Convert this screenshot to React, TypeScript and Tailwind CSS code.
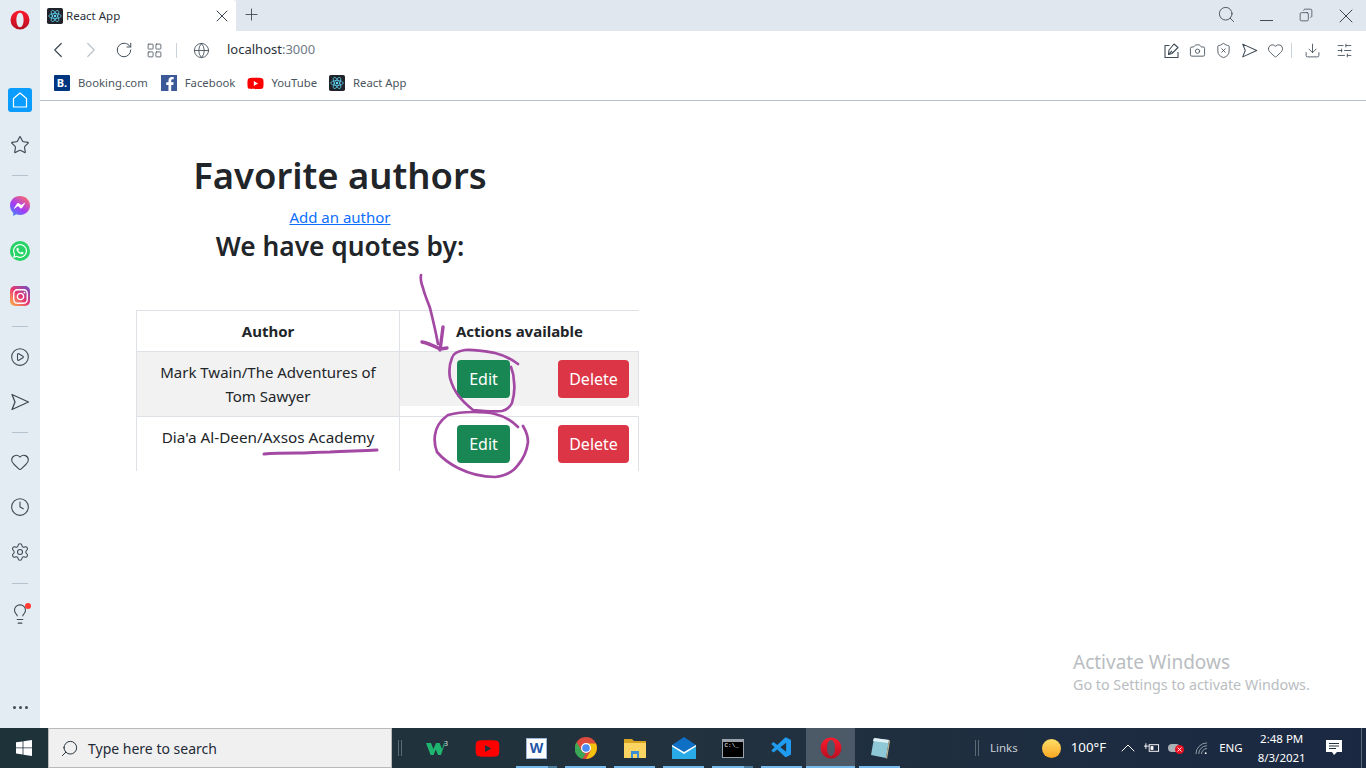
import React from "react";
import { ChevronLeft, ChevronRight, RotateCw, LayoutGrid, Globe, X, Plus, Search, Minus, Copy, Camera, ShieldX, Heart, Download, SlidersHorizontal, Star, CirclePlay, Clock, Settings, Lightbulb, ChevronUp } from "lucide-react";
import { FaWhatsapp, FaInstagram, FaFacebookF, FaYoutube } from "react-icons/fa";
import { VscVscode } from "react-icons/vsc";

const sans = "font-['Noto_Sans','Open_Sans',sans-serif]";

function Atom({ s = 18 }: { s?: number }) {
  return (
    <svg width={s} height={s} viewBox="0 0 18 18" className="shrink-0">
      <rect width="18" height="18" rx="2" fill="#20232a" />
      <g fill="none" stroke="#61dafb" strokeWidth="0.8">
        <ellipse cx="9" cy="9" rx="7" ry="2.8" />
        <ellipse cx="9" cy="9" rx="7" ry="2.8" transform="rotate(60 9 9)" />
        <ellipse cx="9" cy="9" rx="7" ry="2.8" transform="rotate(120 9 9)" />
      </g>
      <circle cx="9" cy="9" r="1.4" fill="#61dafb" />
    </svg>
  );
}

function Opera({ s = 20, id }: { s?: number; id: string }) {
  return (
    <svg width={s} height={s} viewBox="0 0 20 20" className="shrink-0">
      <defs>
        <linearGradient id={id} x1="0" y1="0" x2="0" y2="1">
          <stop offset="0" stopColor="#ff1b2d" />
          <stop offset="1" stopColor="#b70f22" />
        </linearGradient>
      </defs>
      <path fillRule="evenodd" fill={`url(#${id})`} d="M10 0.5a9.5 9.5 0 1 0 0 19a9.5 9.5 0 1 0 0-19zM10 2.800c2.200 0 3.600 3.200 3.600 7.200s-1.400 7.200-3.600 7.200s-3.600-3.200-3.600-7.200s1.400-7.200 3.600-7.200z" />
    </svg>
  );
}

function Messenger() {
  return (
    <svg width="20" height="20" viewBox="0 0 20 20">
      <defs>
        <linearGradient id="ms" x1="0.1" y1="1" x2="0.8" y2="0">
          <stop offset="0" stopColor="#3b8bff" />
          <stop offset="0.45" stopColor="#a33cf5" />
          <stop offset="1" stopColor="#ff6a68" />
        </linearGradient>
      </defs>
      <path fill="url(#ms)" d="M10 0C4.400 0 0 4.100 0 9.600c0 2.900 1.200 5.400 3.200 7.100V20l3-1.700c1.200.4 2.500.6 3.800.6c5.600 0 10-4.100 10-9.400S15.600 0 10 0z" />
      <path fill="#fff" d="M4 12.300l3-4.700c.4-.7 1.300-.8 1.900-.4l2.300 1.700l3.600-2.200c.3-.2.6.1.4.4l-3 4.700c-.4.7-1.300.8-1.900.4L8 10l-3.600 2.700c-.3.2-.6-.1-.4-.4z" />
    </svg>
  );
}

function Chrome() {
  return (
    <svg width="22" height="22" viewBox="0 0 22 22">
      <circle cx="11" cy="11" r="11" fill="#dd4b3e" />
      <path fill="#f4c20d" d="M11 6.500h9.900a11 11 0 0 1-9.900 15.500l4.800-8.500z" />
      <path fill="#3aa757" d="M1.600 5.300l4.900 8.300a5 5 0 0 0 4.500 2.900L7 22A11 11 0 0 1 1.600 5.300z" />
      <circle cx="11" cy="11" r="5" fill="#fff" />
      <circle cx="11" cy="11" r="3.800" fill="#4a8bf5" />
    </svg>
  );
}

function Plane({ s, w = 1.3 }: { s: number; w?: number }) {
  return (
    <svg width={s} height={s} viewBox="0 0 20 20" fill="none" stroke="#3f4a55" strokeWidth={w} strokeLinejoin="round" className="shrink-0">
      <path d="M2 2.500L18.500 10L2 17.500L5 10z" />
    </svg>
  );
}

function TaskSlot({ children, line, stack, active }: { children?: React.ReactNode; line?: boolean; stack?: boolean; active?: boolean }) {
  return (
    <div className={`relative h-full w-[49px] flex items-center justify-center shrink-0 ${active ? "bg-[#4b5a66]" : ""}`}>
      {children}
      {line && <div className={`absolute bottom-0 h-[2px] bg-[#76b9ed] ${active ? "left-0 right-0" : "left-[4px] right-[4px]"}`} />}
      {stack && <div className="absolute bottom-0 right-[4px] w-[9px] h-[2px] bg-[#4b7d9f]" />}
    </div>
  );
}

function Divider() {
  return <div className="w-[16px] h-px bg-[#b5c3cf]" />;
}

function Btn({ color, w, children }: { color: string; w: string; children: React.ReactNode }) {
  return (
    <button className={`h-[38px] ${w} ${color} rounded-[4px] text-white text-[16px] leading-6 flex items-center justify-center`}>
      {children}
    </button>
  );
}

export default function App() {
  return (
    <div className={`relative w-[1366px] h-[768px] overflow-hidden flex flex-col bg-white text-[#212529] ${sans}`}>
      <div className="flex flex-1 min-h-0">
        {/* Sidebar */}
        <aside className="w-10 shrink-0 bg-[#e3ebf3] flex flex-col items-center text-[#3f4a55]">
          <div className="mt-[10px]"><Opera s={20} id="op1" /></div>
          <div className="mt-[58px] w-6 h-6 rounded-[3px] bg-[#0a9dff] flex items-center justify-center">
            <svg width="18" height="18" viewBox="0 0 18 18" fill="none" stroke="#fff" strokeWidth="1.200" strokeLinejoin="round"><path d="M9 2L15.500 7.500V16H2.500V7.500z" /></svg>
          </div>
          <Star size={20} strokeWidth={1.4} className="mt-[23px]" />
          <div className="mt-[20px]"><Divider /></div>
          <div className="mt-[20px] h-5"><Messenger /></div>
          <div className="mt-[25px] w-5 h-5 rounded-full bg-[#25d366] flex items-center justify-center text-white"><FaWhatsapp size={16} /></div>
          <div className="mt-[25px] w-5 h-5 rounded-[5px] bg-gradient-to-tr from-[#fdb42f] via-[#e6306f] to-[#6a3fc4] flex items-center justify-center text-white"><FaInstagram size={17} /></div>
          <div className="mt-[20px]"><Divider /></div>
          <CirclePlay size={20} strokeWidth={1.3} className="mt-[20px]" />
          <div className="mt-[25px]"><Plane s={20} /></div>
          <div className="mt-[20px]"><Divider /></div>
          <Heart size={20} strokeWidth={1.3} className="mt-[19px]" />
          <Clock size={20} strokeWidth={1.3} className="mt-[25px]" />
          <Settings size={20} strokeWidth={1.3} className="mt-[25px]" />
          <div className="mt-[21px]"><Divider /></div>
          <div className="relative mt-[19px]">
            <Lightbulb size={22} strokeWidth={1.2} />
            <span className="absolute top-0 right-0 w-[6px] h-[6px] rounded-full bg-[#ff3b30]" />
          </div>
          <div className="mt-auto mb-[19px] flex gap-[3px]">
            <span className="w-[3px] h-[3px] rounded-full bg-[#3f4a55]" />
            <span className="w-[3px] h-[3px] rounded-full bg-[#3f4a55]" />
            <span className="w-[3px] h-[3px] rounded-full bg-[#3f4a55]" />
          </div>
        </aside>

        {/* Browser */}
        <div className="flex-1 min-w-0 flex flex-col">
          <div className="h-[31px] shrink-0 bg-[#e0e7ef] flex items-center">
            <div className="w-[196px] h-full bg-white flex items-center pl-[7px] pr-[4px] rounded-tr-[3px]">
              <Atom s={16} />
              <span className="ml-[3px] text-[11.500px] text-[#2b3138] flex-1">React App</span>
              <X size={20} strokeWidth={1.2} color="#3b4450" />
            </div>
            <Plus size={19} strokeWidth={1.1} color="#3b4450" className="ml-[6px] -mt-[2px]" />
            <div className="flex-1" />
            <Search size={19} strokeWidth={1.1} color="#3b4450" className="-mt-[2px]" />
            <Minus size={21} strokeWidth={1.1} color="#3b4450" className="ml-[20px] mt-[9px]" />
            <Copy size={14} strokeWidth={1.300} color="#3b4450" className="ml-[22px] -scale-x-100 -mt-[1px]" />
            <X size={24} strokeWidth={1} color="#3b4450" className="ml-[21px] mr-[8px]" />
          </div>

          <div className="h-[38px] shrink-0 flex items-center pl-[5px] pr-[13px]">
            <ChevronLeft size={26} strokeWidth={1.1} color="#3f4a55" />
            <ChevronRight size={26} strokeWidth={1.1} color="#bcc3ca" className="ml-[7px]" />
            <RotateCw size={18} strokeWidth={1.3} color="#3f4a55" className="ml-[11px]" />
            <LayoutGrid size={17} strokeWidth={1.1} color="#3f4a55" className="ml-[13px]" />
            <div className="ml-[13px] w-px h-[15px] bg-[#ccd3da]" />
            <Globe size={17} strokeWidth={1.2} color="#3f4a55" className="ml-[16px]" />
            <span className="ml-[17px] text-[13px] text-[#2b3138]">localhost<span className="text-[#6f7a85]">:3000</span></span>
            <div className="flex-1" />
            <svg width="17" height="17" viewBox="0 0 17 17" fill="none" stroke="#3f4a55" strokeWidth="1.100" strokeLinejoin="round" className="shrink-0">
              <path d="M6.500 3.500H2V15.500H15V10" />
              <path d="M11 2L15 5.500L9 11.500L5.500 12.500L6 8z" />
              <path d="M5.500 12.500L9 9" />
            </svg>
            <Camera size={17} strokeWidth={1.2} color="#3f4a55" className="ml-[9px]" />
            <ShieldX size={17} strokeWidth={1.2} color="#3f4a55" className="ml-[9px]" />
            <div className="ml-[9px]"><Plane s={17} w={1.2} /></div>
            <Heart size={17} strokeWidth={1.2} color="#3f4a55" className="ml-[9px]" />
            <div className="ml-[7px] w-px h-[15px] bg-[#ccd3da]" />
            <Download size={17} strokeWidth={1.2} color="#3f4a55" className="ml-[12px]" />
            <SlidersHorizontal size={17} strokeWidth={1.2} color="#3f4a55" className="ml-[15px]" />
          </div>

          <div className="h-[32px] shrink-0 border-b border-[#b4c2cf] flex items-center pl-[14px] pb-[3px] text-[11.300px] text-[#4b5560]">
            <span className="w-4 h-4 rounded-[1px] bg-[#003580] text-white text-[11px] font-bold flex items-center justify-center">B.</span>
            <span className="ml-[8px]">Booking.com</span>
            <span className="ml-[13px] w-4 h-4 bg-[#3b5998] text-white flex items-end justify-end overflow-hidden"><FaFacebookF size={14} /></span>
            <span className="ml-[8px]">Facebook</span>
            <FaYoutube size={17} color="#f00" className="ml-[12px]" />
            <span className="ml-[7px]">YouTube</span>
            <span className="ml-[12px]"><Atom s={16} /></span>
            <span className="ml-[8px]">React App</span>
          </div>

          {/* Page */}
          <main className="flex-1 min-h-0 relative">
            <div className="w-[600px] flex flex-col items-center">
              <h1 className="mt-[50px] text-[36.400px] leading-[48px] font-semibold">Favorite authors</h1>
              <a className="mt-[6px] text-[15px] leading-6 text-[#0d6efd] underline">Add an author</a>
              <h2 className="text-[26.300px] leading-[36px] font-semibold -mt-[1px]">We have quotes by:</h2>
            </div>
            <div className="ml-[96px] mt-[46px] w-[503px] text-[15px] leading-6">
              <div className="flex h-[42px] border-y border-l border-[#dee2e6] font-bold">
                <div className="w-[263px] flex items-center justify-center border-r border-[#dee2e6]">Author</div>
                <div className="flex-1 flex items-center justify-center">Actions available</div>
              </div>
              <div className="flex h-[65px] border-b border-l border-[#dee2e6]">
                <div className="w-[263px] p-2 bg-[#f2f2f2] text-center border-r border-[#dee2e6]">Mark Twain/The Adventures of Tom Sawyer</div>
                <div className="flex-1">
                  <div className="h-[54px] bg-[#f2f2f2] border-r border-[#dee2e6] flex items-center pl-[57px] gap-[48px]">
                    <Btn color="bg-[#198754]" w="w-[53px]">Edit</Btn>
                    <Btn color="bg-[#dc3545]" w="w-[71px]">Delete</Btn>
                  </div>
                </div>
              </div>
              <div className="flex h-[54px] border-l border-[#dee2e6]">
                <div className="w-[263px] p-2 text-center border-r border-[#dee2e6] text-[15.300px]">Dia'a Al-Deen/Axsos Academy</div>
                <div className="flex-1">
                  <div className="h-[54px] border-r border-[#dee2e6] flex items-center pl-[57px] gap-[48px]">
                    <Btn color="bg-[#198754]" w="w-[53px]">Edit</Btn>
                    <Btn color="bg-[#dc3545]" w="w-[71px]">Delete</Btn>
                  </div>
                </div>
              </div>
            </div>
            <div className="absolute left-[1033px] top-[549px] text-[#b9bdc1]">
              <div className="text-[19px] leading-[24px]">Activate Windows</div>
              <div className="text-[14.300px] leading-[20px] mt-[1px]">Go to Settings to activate Windows.</div>
            </div>
          </main>
        </div>
      </div>

      {/* Taskbar */}
      <footer className="h-10 shrink-0 flex items-center bg-gradient-to-r from-[#1d3239] via-[#22323e] to-[#1a2842] text-white">
        <div className="w-12 h-full shrink-0 flex items-center justify-center">
          <svg width="16" height="16" viewBox="0 0 16 16" fill="#fff"><path d="M0 2.300L6.600 1.400V7.500H0zM7.400 1.300L16 0V7.500H7.400zM0 8.300H6.600V14.500L0 13.600zM7.400 8.300H16V16L7.400 14.700z" /></svg>
        </div>
        <div className="w-[344px] h-full shrink-0 bg-[#f0f0f0] border border-[#b9b9b9] flex items-center pl-[11px] text-[#1f2a36] text-[14px]">
          <Search size={19} strokeWidth={1.2} className="-scale-x-100" />
          <span className="ml-[9px]">Type here to search</span>
        </div>
        <div className="ml-[6px] w-[16px] h-[16px] shrink-0 flex gap-[2px]"><i className="w-px h-full bg-[#5c6a74]" /><i className="w-px h-full bg-[#5c6a74]" /></div>
        <TaskSlot>
          <svg width="22" height="16" viewBox="0 0 22 16" className="-ml-[4px]"><path fill="#1fb56f" d="M0 3h5l2.400 6L10 3h3.600l2.400 6L18 3h1l-4 12h-3l-2.200-5.500L7.600 15h-3z" /><text x="18" y="6" fontSize="7" fill="#d8e8e0">3</text></svg>
        </TaskSlot>
        <TaskSlot><FaYoutube size={25} color="#f00" /></TaskSlot>
        <TaskSlot line stack>
          <div className="w-[21px] h-[21px] bg-white border border-[#9db6dc] flex items-center justify-center"><span className="text-[#1f57a8] font-bold text-[14px] leading-none">W</span></div>
        </TaskSlot>
        <TaskSlot line><Chrome /></TaskSlot>
        <TaskSlot line>
          <svg width="22" height="20" viewBox="0 0 22 20"><path fill="#d9a521" d="M0 1h8l2 2h12v17H0z" /><path fill="#fcd462" d="M0 5h22v15H0z" /><path fill="#3a8fd9" d="M7 13h8v7h-2v-4H9v4H7z" /></svg>
        </TaskSlot>
        <TaskSlot line>
          <svg width="24" height="22" viewBox="0 0 24 22"><path fill="#0f6fc5" d="M0 8L12 0l12 8-12 7z" /><path fill="#29abe8" d="M0 8l12 7 12-7v14H0z" /><path fill="#fff" d="M0 8l12 7 12-7v1.500L12 17 0 9.500z" /></svg>
        </TaskSlot>
        <TaskSlot line stack>
          <div className="w-[22px] h-[19px] bg-black border-t-[3px] border-[#9aa3ab] border-x border-b text-[6px] leading-[8px] pl-[2px] text-white font-['Liberation_Mono',monospace]">C:\_</div>
        </TaskSlot>
        <TaskSlot line><VscVscode size={24} color="#1f9cf0" /></TaskSlot>
        <TaskSlot line active><Opera s={22} id="op2" /></TaskSlot>
        <TaskSlot line>
          <svg width="22" height="23" viewBox="0 0 22 23"><path fill="#8ec7d6" d="M5 1l15 2-3 18-15-3z" /><path fill="#dff1f4" d="M5 1l15 2-1 3L4 4z" /><path fill="#c9b68d" d="M20 3l1 1-3 18-1-1z" /></svg>
        </TaskSlot>
        <div className="ml-[71px] w-[20px] h-[16px] shrink-0 flex gap-[2px]"><i className="w-px h-full bg-[#5c6a74]" /><i className="w-px h-full bg-[#5c6a74]" /></div>
        <span className="-ml-[5px] text-[11.500px] text-[#c8ced4]">Links</span>
        <div className="ml-[24px] w-[19px] h-[19px] rounded-full bg-gradient-to-b from-[#ffe066] to-[#f9a51a]" />
        <span className="ml-[10px] text-[13.300px]">100°F</span>
        <ChevronUp size={24} strokeWidth={1} className="ml-[10px]" />
        <svg width="16" height="12" viewBox="0 0 17 12" className="ml-[4px]" fill="none" stroke="#fff"><rect x="5.500" y="2.500" width="10" height="7" /><rect x="7" y="4" width="3" height="4" fill="#fff" stroke="none" /><path d="M0 4h5M2 1v6" /></svg>
        <div className="relative ml-[8px] w-[16px] h-3">
          <div className="absolute left-0 top-[2px] w-[12px] h-[8px] rounded-full bg-[#a9b1b8]" />
          <div className="absolute right-0 top-[3px] w-[9px] h-[9px] rounded-full bg-[#e81123] text-white flex items-center justify-center"><X size={7} strokeWidth={3} /></div>
        </div>
        <svg width="13" height="13" viewBox="0 0 14 14" className="ml-[11px]" fill="none" stroke="#9aa5ae" strokeWidth="1"><path d="M1 13A12 12 0 0 1 13 1M4 13a9 9 0 0 1 9-9M7 13a6 6 0 0 1 6-6" /><circle cx="11.500" cy="12" r="1" fill="#fff" stroke="none" /></svg>
        <span className="ml-[11px] text-[11.500px]">ENG</span>
        <div className="ml-[16px] w-[46px] text-center text-[11.500px] leading-[19px] shrink-0 whitespace-nowrap flex flex-col items-center">
          <span>2:48 PM</span>
          <span>8/3/2021</span>
        </div>
        <svg width="16" height="16" viewBox="0 0 16 16" className="ml-[21px] shrink-0">
          <path fill="#fff" d="M0 0H16V12H11L8 15L6 12H0z" />
          <path stroke="#22303c" strokeWidth="1" d="M3 3.500H13M3 6H13M3 8.500H10" />
        </svg>
        <div className="ml-auto mr-[4px] w-px h-full bg-[#5c6a74]" />
      </footer>

      {/* Hand-drawn ink over the page */}
      <svg className="absolute inset-0 pointer-events-none" width="1366" height="768" fill="none" stroke="#a349a4" strokeWidth="2.700" strokeLinecap="round" strokeLinejoin="round">
        <path d="M421 275C420 280 423 288 423 288C425 296 428 302 430 308C433 320 436 333 438 344" />
        <path d="M443 327C442 335 441 343 440 350M422 342C428 343 434 346 440 349L447 348" strokeWidth="3.400" />
        <path d="M518 364C510 358 503 355 495 353C484 351 474 349 465 350C457 351 453 354 452 358C449 365 449 372 450 378C452 385 455 391 458 395C463 402 468 406 473 410C483 411 493 412 502 411C507 410 510 407 512 403C514 396 515 389 514 382C514 377 513 372 511 367" />
        <path d="M518 427C512 421 504 416 495 414C487 412 480 412 473 412C463 412 455 413 448 415C441 420 436 427 435 435C434 442 435 447 437 452C443 459 450 464 458 468C470 474 483 477 495 477C505 476 513 472 518 465C524 458 527 450 528 442C528 436 526 431 523 426" />
        <path d="M264 454C275 453 286 453 297 453C308 453 319 452 330 452C346 451 362 451 377 450" strokeWidth="3" />
      </svg>
    </div>
  );
}
